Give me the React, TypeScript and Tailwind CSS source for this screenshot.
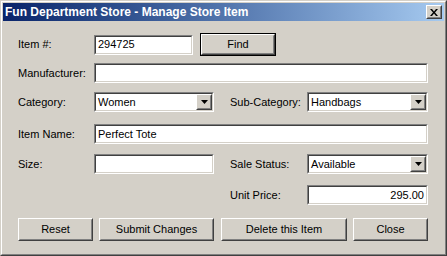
import type { ReactNode } from "react";

const FONT = "font-['Liberation_Sans',Arial,sans-serif]";

function Sunken({ className, children }: { className: string; children?: ReactNode }) {
  return (
    <div className={`h-[20px] border border-t-[#808080] border-l-[#808080] border-r-white border-b-white ${className}`}>
      <div className="h-full border border-t-[#404040] border-l-[#404040] border-r-[#d4d0c8] border-b-[#d4d0c8] bg-white flex items-center">
        {children}
      </div>
    </div>
  );
}

function Raised({ className, children }: { className: string; children?: ReactNode }) {
  return (
    <div className={`border border-t-white border-l-white border-r-[#404040] border-b-[#404040] bg-[#d4d0c8] ${className}`}>
      <div className="h-full border border-t-[#d4d0c8] border-l-[#d4d0c8] border-r-[#808080] border-b-[#808080] flex items-center justify-center">
        {children}
      </div>
    </div>
  );
}

function Select({ className, value }: { className: string; value: string }) {
  return (
    <Sunken className={className}>
      <span className="flex-1 pl-[2px] text-[11px] text-black">{value}</span>
      <Raised className="w-[16px] h-full">
        <svg width="7" height="4" viewBox="0 0 7 4">
          <path d="M0 0h7L3.5 4z" fill="#000" />
        </svg>
      </Raised>
    </Sunken>
  );
}

function Label({ className, children }: { className: string; children: ReactNode }) {
  return <span className={`text-[11px] text-black ${className}`}>{children}</span>;
}

export default function App() {
  return (
    <div className={`w-[447px] h-[256px] border border-t-[#d4d0c8] border-l-[#d4d0c8] border-r-[#404040] border-b-[#404040] bg-[#d4d0c8] ${FONT}`}>
      <div className="h-full border border-t-white border-l-white border-r-[#808080] border-b-[#808080] p-px">
        {/* title bar */}
        <div className="h-[18px] flex items-center justify-between pl-[2px] pr-[2px] bg-gradient-to-r from-[#0a246a] to-[#a6caf0]">
          <span className="text-white font-bold text-[12px] leading-none">Fun Department Store - Manage Store Item</span>
          <Raised className="w-[16px] h-[14px]">
            <svg width="8" height="7" viewBox="0 0 8 7">
              <path d="M0 0h2l2 2.5L6 0h2L5 3.5 8 7H6L4 4.5 2 7H0l3-3.5z" fill="#000" />
            </svg>
          </Raised>
        </div>

        <div className="pl-[15px] pt-[12px] flex flex-col">
          <div className="flex items-center h-[23px]">
            <Label className="w-[76px]">Item #:</Label>
            <Sunken className="w-[99px]">
              <span className="pl-[2px] text-[11px]">294725</span>
            </Sunken>
            <div className="ml-[7px] border border-black">
              <Raised className="w-[74px] h-[21px]">
                <span className="text-[11px]">Find</span>
              </Raised>
            </div>
          </div>

          <div className="flex items-center mt-[7px]">
            <Label className="w-[76px]">Manufacturer:</Label>
            <Sunken className="w-[334px]" />
          </div>

          <div className="flex items-center mt-[9px]">
            <Label className="w-[76px]">Category:</Label>
            <Select className="w-[120px]" value="Women" />
            <Label className="ml-[16px] w-[77px]">Sub-Category:</Label>
            <Select className="w-[121px]" value="Handbags" />
          </div>

          <div className="flex items-center mt-[12px]">
            <Label className="w-[76px]">Item Name:</Label>
            <Sunken className="w-[334px]">
              <span className="pl-[2px] text-[11px]">Perfect Tote</span>
            </Sunken>
          </div>

          <div className="flex items-center mt-[10px]">
            <Label className="w-[76px]">Size:</Label>
            <Sunken className="w-[120px]" />
            <Label className="ml-[16px] w-[77px]">Sale Status:</Label>
            <Select className="w-[121px]" value="Available" />
          </div>

          <div className="flex items-center mt-[11px]">
            <div className="w-[212px]" />
            <Label className="w-[77px]">Unit Price:</Label>
            <Sunken className="w-[121px]">
              <span className="flex-1 text-right pr-[2px] text-[11px]">295.00</span>
            </Sunken>
          </div>

          <div className="flex items-center mt-[13px] h-[23px]">
            <Raised className="w-[75px] h-full">
              <span className="text-[11px]">Reset</span>
            </Raised>
            <Raised className="ml-[6px] w-[115px] h-full">
              <span className="text-[11px]">Submit Changes</span>
            </Raised>
            <Raised className="ml-[7px] w-[126px] h-full">
              <span className="text-[11px]">Delete this Item</span>
            </Raised>
            <Raised className="ml-[6px] w-[75px] h-full">
              <span className="text-[11px]">Close</span>
            </Raised>
          </div>
        </div>
      </div>
    </div>
  );
}
